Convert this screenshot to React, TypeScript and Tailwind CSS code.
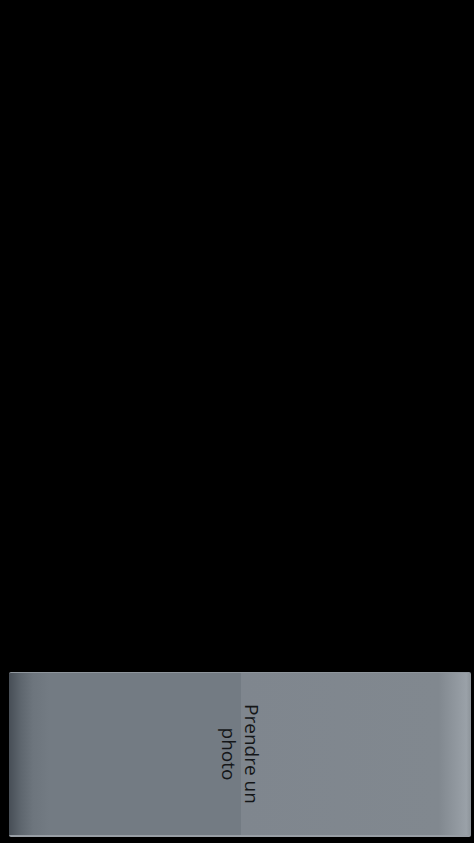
import React from "react";

export default function App() {
  return (
    <div className="w-[474px] h-[843px] bg-black flex flex-col justify-end overflow-hidden">
      <button
        className="ml-[9px] mr-[3px] mb-[6px] h-[165px] flex items-center justify-center border-t border-t-[#8f969d] border-b-2 border-b-[#989ea5] rounded-[2px] bg-[linear-gradient(to_right,#474e56_0px,#5e666e_12px,#6d757d_24px,#737b83_40px,#737b83_50.2%,#7f868e_50.2%,#81888f_93%,#9aa1a8_99%,#8c9399_100%)]"
      >
        <div
          className="rotate-90 w-[124px] text-center text-[19px] leading-[23px] text-[#141618]"
          style={{ fontFamily: '"Open Sans", "Noto Sans", sans-serif' }}
        >
          Prendre un photo
        </div>
      </button>
    </div>
  );
}
